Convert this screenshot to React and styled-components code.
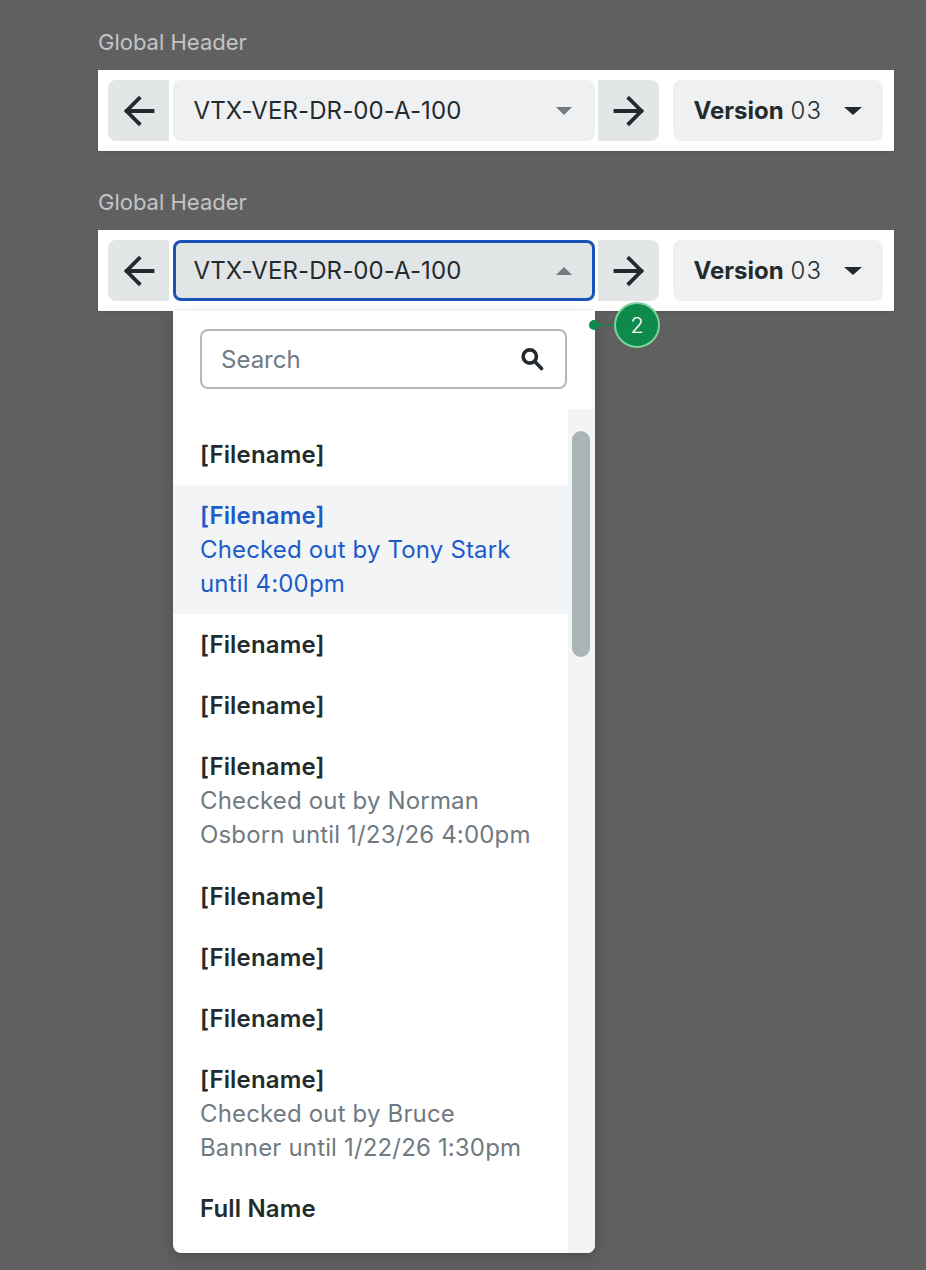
import React from 'react';
import styled, { createGlobalStyle } from 'styled-components';

const GlobalStyle = createGlobalStyle`
  html, body { margin: 0; padding: 0; background: #606060; }
  body { font-family: Inter, "Liberation Sans", sans-serif; }
`;

const Page = styled.div`
  width: 926px;
  height: 1270px;
  box-sizing: border-box;
  padding: 30px 32px 0 98px;
  overflow: hidden;
`;
const Section = styled.section`
  position: relative;
  margin-bottom: 39px;
`;
const Label = styled.div`
  height: 24px;
  line-height: 24px;
  margin-bottom: 16px;
  font-size: 22px;
  color: #c2c4c4;
`;
const Bar = styled.div`
  display: flex;
  height: 81px;
  box-sizing: border-box;
  padding: 10px;
  background: #fff;
  box-shadow: 0 1px 2px rgba(0, 0, 0, 0.15);
`;
const ArrowButton = styled.div`
  width: 61px;
  margin: ${(p) => (p.$side === 'left' ? '0 4px 0 0' : '0 14px 0 3px')};
  display: flex;
  align-items: center;
  justify-content: center;
  background: #e2e6e7;
  border-radius: ${(p) => (p.$side === 'left' ? '8px 0 0 8px' : '0 8px 8px 0')};
  color: #242b2e;
`;
const Select = styled.div`
  width: 422px;
  box-sizing: border-box;
  display: flex;
  align-items: center;
  justify-content: space-between;
  padding: 0 ${(p) => (p.$open ? '20px' : '23px')} 0 ${(p) => (p.$open ? '17.5px' : '20.5px')};
  background: ${(p) => (p.$open ? '#e1e5e6' : '#eef0f2')};
  border: ${(p) => (p.$open ? '3px solid #1a52b8' : 'none')};
  border-radius: 8px;
  font-size: 24px;
  letter-spacing: 0.1px;
  color: #242b2e;
`;
const Version = styled.div`
  width: 210px;
  box-sizing: border-box;
  display: flex;
  align-items: center;
  justify-content: space-between;
  padding: 0 21px 0 20.5px;
  background: #eef0f2;
  border-radius: 8px;
  font-size: 24px;
  color: #242b2e;
  b { font-weight: 700; }
`;
const VersionNo = styled.span`
  font-weight: 300;
  letter-spacing: 1.2px;
`;
const Caret = styled.span`
  width: 0;
  height: 0;
  border-left: ${(p) => p.$half}px solid transparent;
  border-right: ${(p) => p.$half}px solid transparent;
  border-top: ${(p) => (p.$up ? 'none' : `8.5px solid ${p.$color}`)};
  border-bottom: ${(p) => (p.$up ? `8.5px solid ${p.$color}` : 'none')};
`;
const Dropdown = styled.div`
  position: absolute;
  left: 75px;
  top: 121px;
  width: 421.5px;
  height: 942px;
  display: flex;
  flex-direction: column;
  background: #fff;
  border-radius: 0 0 8px 8px;
  box-shadow: 0 4px 14px rgba(0, 0, 0, 0.2);
  overflow: hidden;
`;
const SearchBox = styled.div`
  flex: none;
  height: 60px;
  box-sizing: border-box;
  margin: 18px 27.5px 20px 27px;
  padding: 0 21px 0 19px;
  display: flex;
  align-items: center;
  justify-content: space-between;
  border: 2px solid #b1b8bc;
  border-radius: 8px;
  font-size: 24px;
  color: #6f7a82;
`;
const ListWrap = styled.div`
  flex: 1;
  display: flex;
  min-height: 0;
`;
const List = styled.div`
  flex: 1;
  padding-top: 15px;
`;
const Row = styled.div`
  padding: 13.6px 27px;
  line-height: 34px;
  font-size: 24px;
  letter-spacing: 0.16px;
  background: ${(p) => (p.$active ? '#f3f4f6' : 'transparent')};
  color: ${(p) => (p.$active ? '#1c5cc9' : '#6f7a82')};
`;
const RowName = styled.div`
  font-weight: 600;
  color: ${(p) => (p.$active ? '#1c5cc9' : '#242b2e')};
`;
const Track = styled.div`
  flex: none;
  width: 27px;
  box-sizing: border-box;
  padding: 22px 5px 0 4px;
  background: #f3f4f6;
`;
const Thumb = styled.div`
  height: 226px;
  border-radius: 9px;
  background: #aab3b8;
`;
const Pin = styled.div`
  position: absolute;
  left: 491px;
  top: 112px;
  display: flex;
  align-items: center;
`;
const PinDot = styled.span`
  width: 10px;
  height: 10px;
  border-radius: 50%;
  background: #0e8a4a;
`;
const PinLine = styled.span`
  width: 15px;
  border-top: 2px dashed #0e8a4a;
`;
const PinBadge = styled.span`
  width: 46px;
  height: 46px;
  box-sizing: border-box;
  display: flex;
  align-items: center;
  justify-content: center;
  border: 2px solid #7dd39e;
  border-radius: 50%;
  background: #0e8a4a;
  color: #fff;
  font-size: 22px;
  font-weight: 300;
`;

const LeftArrow = () => (
  <svg width="36" height="36" viewBox="0 0 36 36" fill="none" stroke="currentColor" strokeWidth="3.8" strokeLinecap="square">
    <path d="M6 18H31.5M18 5.5L5.5 18L18 30.5" />
  </svg>
);
const RightArrow = () => (
  <svg width="36" height="36" viewBox="0 0 36 36" fill="none" stroke="currentColor" strokeWidth="3.8" strokeLinecap="square">
    <path d="M30 18H4.5M18 5.5L30.5 18L18 30.5" />
  </svg>
);
const SearchIcon = () => (
  <svg width="24" height="24" viewBox="0 0 24 24" fill="none" stroke="#242b2e" strokeWidth="3.6">
    <circle cx="9.8" cy="9.5" r="6.6" />
    <path d="M14.8 14.5L21.5 21.5" strokeLinecap="round" />
  </svg>
);

const rows = [
  { name: '[Filename]' },
  { name: '[Filename]', note: ['Checked out by Tony Stark', 'until 4:00pm'], active: true },
  { name: '[Filename]' },
  { name: '[Filename]' },
  { name: '[Filename]', note: ['Checked out by Norman', 'Osborn until 1/23/26 4:00pm'] },
  { name: '[Filename]' },
  { name: '[Filename]' },
  { name: '[Filename]' },
  { name: '[Filename]', note: ['Checked out by Bruce', 'Banner until 1/22/26 1:30pm'] },
  { name: 'Full Name' },
];

function Header({ open }) {
  return (
    <Bar>
      <ArrowButton $side="left"><LeftArrow /></ArrowButton>
      <Select $open={open}>
        VTX-VER-DR-00-A-100
        <Caret $up={open} $half={8} $color="#6f7a82" />
      </Select>
      <ArrowButton $side="right"><RightArrow /></ArrowButton>
      <Version>
        <span><b>Version</b> <VersionNo>03</VersionNo></span>
        <Caret $half={9} $color="#242b2e" />
      </Version>
    </Bar>
  );
}

export default function App() {
  return (
    <Page>
      <GlobalStyle />
      <Section>
        <Label>Global Header</Label>
        <Header />
      </Section>
      <Section>
        <Label>Global Header</Label>
        <Header open />
        <Dropdown>
          <SearchBox>Search<SearchIcon /></SearchBox>
          <ListWrap>
            <List>
              {rows.map((row, i) => (
                <Row key={i} $active={row.active}>
                  <RowName $active={row.active}>{row.name}</RowName>
                  {row.note && row.note.map((line) => <div key={line}>{line}</div>)}
                </Row>
              ))}
            </List>
            <Track><Thumb /></Track>
          </ListWrap>
        </Dropdown>
        <Pin>
          <PinDot />
          <PinLine />
          <PinBadge>2</PinBadge>
        </Pin>
      </Section>
    </Page>
  );
}
